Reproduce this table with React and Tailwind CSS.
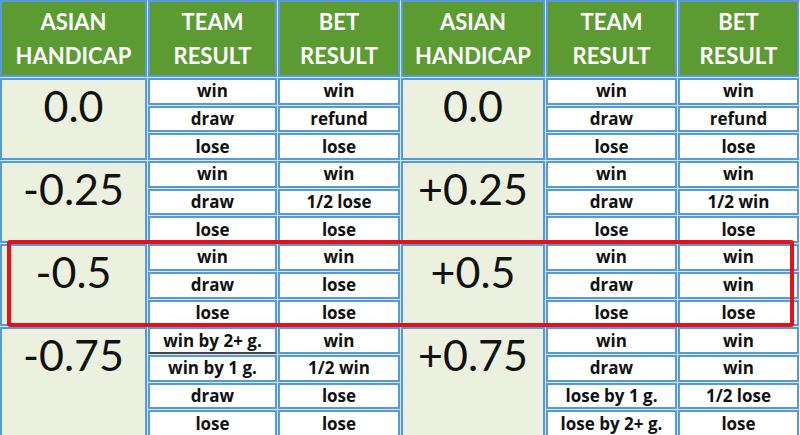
const left = [
  { h: '0.0', rows: [['win', 'win'], ['draw', 'refund'], ['lose', 'lose']] },
  { h: '-0.25', rows: [['win', 'win'], ['draw', '1/2 lose'], ['lose', 'lose']] },
  { h: '-0.5', rows: [['win', 'win'], ['draw', 'lose'], ['lose', 'lose']] },
  {
    h: '-0.75',
    rows: [['win by 2+ g.', 'win'], ['win by 1 g.', '1/2 win'], ['draw', 'lose'], ['lose', 'lose']],
  },
]

const right = [
  { h: '0.0', rows: [['win', 'win'], ['draw', 'refund'], ['lose', 'lose']] },
  { h: '+0.25', rows: [['win', 'win'], ['draw', '1/2 win'], ['lose', 'lose']] },
  { h: '+0.5', rows: [['win', 'win'], ['draw', 'win'], ['lose', 'lose']] },
  {
    h: '+0.75',
    rows: [['win', 'win'], ['draw', 'win'], ['lose by 1 g.', '1/2 lose'], ['lose by 2+ g.', 'lose']],
  },
]

function Head({ top, bottom }) {
  return (
    <div className="flex flex-col items-center justify-center border-2 border-[#559ada] bg-[#5c9b31] text-[22px] font-bold leading-[34px] text-white">
      <span>{top}</span>
      <span>{bottom}</span>
    </div>
  )
}

function Cell({ children, dark }) {
  return (
    <div
      className={
        'flex items-center justify-center border-2 border-[#559ada] bg-white pb-px font-["Open_Sans",sans-serif] text-[17px] font-bold leading-none text-[#111]' +
        (dark ? ' border-b-[#444]' : '')
      }
    >
      {children}
    </div>
  )
}

function Handicap({ value, span }) {
  return (
    <div
      className={
        'flex justify-center border-2 border-[#559ada] bg-[#ebf1de] pt-[1px] text-[43px] leading-[50px] text-[#111] ' +
        (span === 4 ? 'row-span-4' : 'row-span-3')
      }
    >
      {value}
    </div>
  )
}

export default function App() {
  const cells = []
  left.forEach((g, gi) => {
    const r = right[gi]
    g.rows.forEach((row, ri) => {
      if (ri === 0) cells.push(<Handicap key={`lh${gi}`} value={g.h} span={g.rows.length} />)
      cells.push(
        <Cell key={`lt${gi}${ri}`} dark={row[0] === 'win by 2+ g.'}>
          {row[0]}
        </Cell>
      )
      cells.push(<Cell key={`lb${gi}${ri}`}>{row[1]}</Cell>)
      if (ri === 0) cells.push(<Handicap key={`rh${gi}`} value={r.h} span={r.rows.length} />)
      cells.push(<Cell key={`rt${gi}${ri}`}>{r.rows[ri][0]}</Cell>)
      cells.push(<Cell key={`rb${gi}${ri}`}>{r.rows[ri][1]}</Cell>)
    })
  })

  return (
    <div className="relative h-[435px] w-[800px] overflow-hidden bg-white" style={{ fontFamily: 'Lato, "Open Sans", sans-serif' }}>
      <div className="grid h-[437px] w-[799px] grid-cols-[147fr_129fr_122fr_144fr_131fr_121fr] grid-rows-[77px_repeat(13,minmax(0,1fr))] gap-px bg-[#d6e7f7]">
        <Head top="ASIAN" bottom="HANDICAP" />
        <Head top="TEAM" bottom="RESULT" />
        <Head top="BET" bottom="RESULT" />
        <Head top="ASIAN" bottom="HANDICAP" />
        <Head top="TEAM" bottom="RESULT" />
        <Head top="BET" bottom="RESULT" />
        {cells}
      </div>
      {/* highlighted -0.5 / +0.5 rows */}
      <div className="absolute left-[7px] top-[240px] h-[87px] w-[787px] rounded-[3px] border-4 border-[#e6101a]" />
    </div>
  )
}
